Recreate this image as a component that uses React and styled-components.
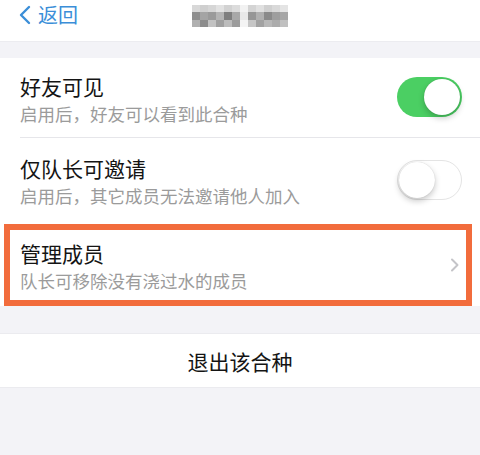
import styled, { createGlobalStyle } from "styled-components";

const GlobalStyle = createGlobalStyle`
  html, body {
    margin: 0;
    padding: 0;
    background: #f3f3f7;
    font-family: "Noto Sans CJK SC", "Noto Sans", sans-serif;
  }
`;

const mosaic = [
  ["#d8d8d8", "#cfcfcf", "#d6d6d6", "#e2e2e2", "#d2d2d2", "#dcdcdc", "#f2f2f2", "#d4d4d4", "#e0e0e0", "#d0d0d0", "#d9d9d9", "#e4e4e4"],
  ["#8e8e8e", "#a4a4a4", "#9a9a9a", "#b4b4b4", "#7e7e7e", "#a8a8a8", "#e8e8e8", "#969696", "#b0b0b0", "#8a8a8a", "#9e9e9e", "#a6a6a6"],
  ["#b0b0b0", "#8c8c8c", "#c2c2c2", "#a0a0a0", "#bcbcbc", "#9c9c9c", "#f4f4f4", "#c6c6c6", "#a2a2a2", "#b8b8b8", "#acacac", "#c0c0c0"],
];

const App = () => {
  return (
    <Page>
      <GlobalStyle />
      <NavBar>
        <Back>
          <svg width="14" height="20" viewBox="0 0 14 20">
            <path d="M11 2 L3 10 L11 18" fill="none" stroke="#3b8ed8" strokeWidth="2.4" strokeLinecap="round" strokeLinejoin="round" />
          </svg>
          返回
        </Back>
        <Mosaic>
          {mosaic.flat().map((c, i) => (
            <span key={i} style={{ background: c }} />
          ))}
        </Mosaic>
      </NavBar>
      <Gap height={16} />
      <List>
        <Row divider height={80}>
          <Texts>
            <Title>好友可见</Title>
            <Sub>启用后，好友可以看到此合种</Sub>
          </Texts>
          <Switch on />
        </Row>
        <Row height={84}>
          <Texts>
            <Title>仅队长可邀请</Title>
            <Sub>启用后，其它成员无法邀请他人加入</Sub>
          </Texts>
          <Switch />
        </Row>
        <Highlight>
          <Texts>
            <Title>管理成员</Title>
            <Sub>队长可移除没有浇过水的成员</Sub>
          </Texts>
          <svg width="10" height="14" viewBox="0 0 10 14">
            <path d="M2 1.5 L7.5 7 L2 12.5" fill="none" stroke="#c4c4c8" strokeWidth="2" strokeLinecap="round" strokeLinejoin="round" />
          </svg>
        </Highlight>
      </List>
      <Gap height={27} />
      <ExitButton>退出该合种</ExitButton>
    </Page>
  );
};

export default App;

const Page = styled.div`
  width: 480px;
  height: 455px;
  background: #f3f3f7;
  overflow: hidden;
`;

const NavBar = styled.div`
  height: 42px;
  background: #fff;
  position: relative;
  display: flex;
  align-items: center;
  padding: 0 0 0 18px;
  border-bottom: 1px solid #ececf0;
  box-sizing: border-box;
`;

const Back = styled.div`
  display: flex;
  align-items: center;
  gap: 6px;
  color: #3b8ed8;
  font-size: 20px;
  margin-top: -12px;
`;

const Mosaic = styled.div`
  position: absolute;
  left: 192px;
  top: 5px;
  width: 96px;
  height: 22px;
  display: grid;
  grid-template-columns: repeat(12, 1fr);
  grid-template-rows: repeat(3, 1fr);
  filter: blur(0.6px);
  span {
    display: block;
  }
`;

const Gap = styled.div`
  height: ${(p) => p.height}px;
`;

const List = styled.div`
  background: #fff;
`;

const Row = styled.div`
  height: ${(p) => p.height}px;
  display: flex;
  align-items: center;
  justify-content: space-between;
  padding: 0 18px 0 20px;
  position: relative;
  ${(p) =>
    p.divider &&
    `
    &::after {
      content: "";
      position: absolute;
      left: 20px;
      right: 0;
      bottom: 0;
      height: 1px;
      background: #e6e6ea;
    }
  `}
`;

const Highlight = styled.div`
  height: 82px;
  box-sizing: border-box;
  margin: 2px 8px 0 4px;
  border: 6px solid #f26c3c;
  display: flex;
  align-items: center;
  justify-content: space-between;
  padding: 0 6px 0 10px;
`;

const Texts = styled.div`
  display: flex;
  flex-direction: column;
  gap: 4px;
  margin-top: 2px;
`;

const Title = styled.div`
  font-size: 21px;
  line-height: 26px;
  color: #141414;
`;

const Sub = styled.div`
  font-size: 17.5px;
  line-height: 22px;
  color: #9b9b9b;
`;

const Switch = styled.div`
  width: 65px;
  height: 40px;
  border-radius: 20px;
  box-sizing: border-box;
  position: relative;
  background: ${(p) => (p.on ? "#4bcf63" : "#fff")};
  border: ${(p) => (p.on ? "none" : "1.5px solid #e4e4e4")};
  margin-top: ${(p) => (p.on ? "-2px" : "0")};
  &::after {
    content: "";
    position: absolute;
    top: ${(p) => (p.on ? "2px" : "0.5px")};
    ${(p) => (p.on ? "right: 2px;" : "left: 0.5px;")}
    width: 36px;
    height: 36px;
    border-radius: 50%;
    background: #fff;
    box-shadow: 0 3px 6px rgba(0, 0, 0, 0.22), 0 0 1px rgba(0, 0, 0, 0.2);
  }
`;

const ExitButton = styled.div`
  height: 55px;
  background: #fff;
  display: flex;
  align-items: center;
  justify-content: center;
  font-size: 21px;
  color: #141414;
  border-top: 1px solid #ebebef;
  border-bottom: 1px solid #ebebef;
  box-sizing: border-box;
`;
